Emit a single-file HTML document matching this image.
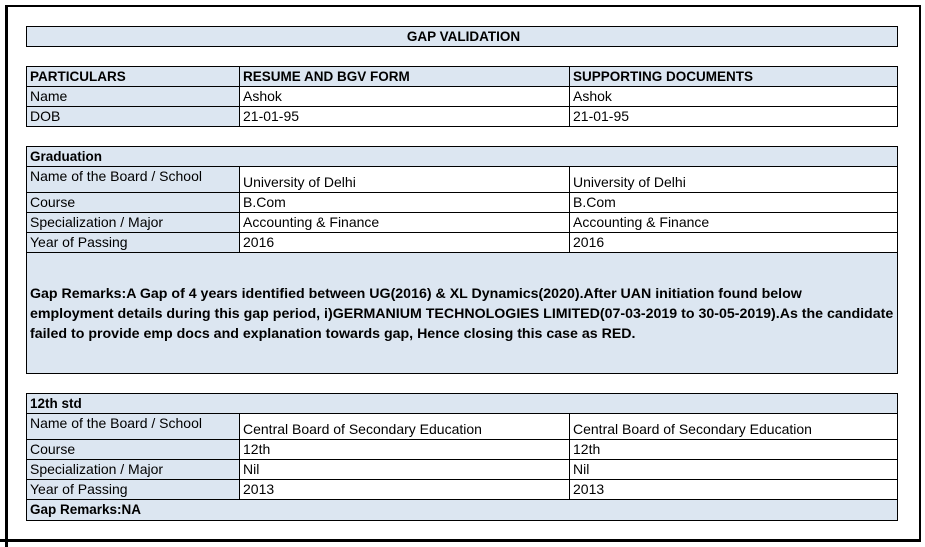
<!DOCTYPE html>
<html><head><meta charset="utf-8"><style>
*{margin:0;padding:0;box-sizing:border-box}
body{width:925px;height:547px;background:#fff;position:relative;overflow:hidden;font-family:"Liberation Sans",Arial,sans-serif;font-size:14px;color:#000}
.a{position:absolute}
.c{position:absolute;border:1px solid #000;background:#fff;padding-left:3px;line-height:19px;white-space:nowrap;overflow:hidden}
.b{background:#dce6f1}
.bo{font-weight:bold;font-size:13.5px}
.bot{display:flex;align-items:flex-end}
</style></head><body>
<div class="a" style="left:5px;top:5px;width:3px;height:542px;background:#000"></div>
<div class="a" style="left:5px;top:5px;width:916px;height:2px;background:#000"></div>
<div class="a" style="left:919px;top:5px;width:2px;height:537px;background:#000"></div>
<div class="a" style="left:0;top:539px;width:921px;height:3px;background:#000"></div>

<div class="c b bo" style="left:26px;top:26px;width:872px;height:21px;text-align:center">GAP VALIDATION</div>

<div class="c b bo" style="left:26px;top:66px;width:214px;height:21px">PARTICULARS</div>
<div class="c b bo" style="left:239px;top:66px;width:331px;height:21px">RESUME AND BGV FORM</div>
<div class="c b bo" style="left:569px;top:66px;width:329px;height:21px">SUPPORTING DOCUMENTS</div>
<div class="c b" style="left:26px;top:86px;width:214px;height:21px">Name</div>
<div class="c" style="left:239px;top:86px;width:331px;height:21px">Ashok</div>
<div class="c" style="left:569px;top:86px;width:329px;height:21px">Ashok</div>
<div class="c b" style="left:26px;top:106px;width:214px;height:21px">DOB</div>
<div class="c" style="left:239px;top:106px;width:331px;height:21px">21-01-95</div>
<div class="c" style="left:569px;top:106px;width:329px;height:21px">21-01-95</div>

<div class="c b bo" style="left:26px;top:146px;width:872px;height:21px">Graduation</div>
<div class="c b" style="left:26px;top:166px;width:214px;height:27px">Name of the Board / School</div>
<div class="c bot" style="left:239px;top:166px;width:331px;height:27px">University of Delhi</div>
<div class="c bot" style="left:569px;top:166px;width:329px;height:27px">University of Delhi</div>
<div class="c b" style="left:26px;top:192px;width:214px;height:21px">Course</div>
<div class="c" style="left:239px;top:192px;width:331px;height:21px">B.Com</div>
<div class="c" style="left:569px;top:192px;width:329px;height:21px">B.Com</div>
<div class="c b" style="left:26px;top:212px;width:214px;height:21px">Specialization / Major</div>
<div class="c" style="left:239px;top:212px;width:331px;height:21px">Accounting &amp; Finance</div>
<div class="c" style="left:569px;top:212px;width:329px;height:21px">Accounting &amp; Finance</div>
<div class="c b" style="left:26px;top:232px;width:214px;height:21px">Year of Passing</div>
<div class="c" style="left:239px;top:232px;width:331px;height:21px">2016</div>
<div class="c" style="left:569px;top:232px;width:329px;height:21px">2016</div>
<div class="c b bo" style="left:26px;top:252px;width:872px;height:122px;padding-top:31px;line-height:20px;font-size:14.2px">Gap Remarks:A Gap of 4 years identified between UG(2016) &amp; XL Dynamics(2020).After UAN initiation found below<br>employment details during this gap period, i)GERMANIUM TECHNOLOGIES LIMITED(07-03-2019 to 30-05-2019).As the candidate<br>failed to provide emp docs and explanation towards gap, Hence closing this case as RED.</div>

<div class="c b bo" style="left:26px;top:393px;width:872px;height:21px">12th std</div>
<div class="c b" style="left:26px;top:413px;width:214px;height:27px">Name of the Board / School</div>
<div class="c bot" style="left:239px;top:413px;width:331px;height:27px">Central Board of Secondary Education</div>
<div class="c bot" style="left:569px;top:413px;width:329px;height:27px">Central Board of Secondary Education</div>
<div class="c b" style="left:26px;top:439px;width:214px;height:21px">Course</div>
<div class="c" style="left:239px;top:439px;width:331px;height:21px">12th</div>
<div class="c" style="left:569px;top:439px;width:329px;height:21px">12th</div>
<div class="c b" style="left:26px;top:459px;width:214px;height:21px">Specialization / Major</div>
<div class="c" style="left:239px;top:459px;width:331px;height:21px">Nil</div>
<div class="c" style="left:569px;top:459px;width:329px;height:21px">Nil</div>
<div class="c b" style="left:26px;top:479px;width:214px;height:21px">Year of Passing</div>
<div class="c" style="left:239px;top:479px;width:331px;height:21px">2013</div>
<div class="c" style="left:569px;top:479px;width:329px;height:21px">2013</div>
<div class="c b bo" style="left:26px;top:499px;width:872px;height:22px">Gap Remarks:NA</div>
</body></html>
